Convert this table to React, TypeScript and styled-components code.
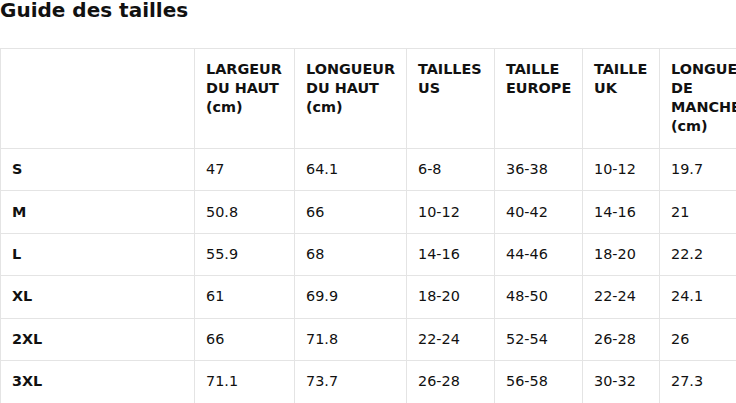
import React from "react";
import styled, { createGlobalStyle } from "styled-components";

const GlobalStyle = createGlobalStyle`
  html, body {
    margin: 0;
    padding: 0;
    background: #ffffff;
    overflow: hidden;
  }
  body {
    font-family: "DejaVu Sans", "Liberation Sans", sans-serif;
    color: #111111;
  }
`;

const Page = styled.div`
  display: flex;
  flex-direction: column;
  gap: 27px;
  width: max-content;
`;

const Title = styled.h1`
  margin: 0;
  font-size: 20px;
  line-height: 21px;
  font-weight: 700;
  color: #111111;
`;

const Table = styled.table`
  border-collapse: collapse;
  table-layout: fixed;
  width: 771px;
  font-size: 14.4px;
  line-height: 19.1px;
`;

const Col = styled.col<{ $w: number }>`
  width: ${(p) => p.$w}px;
`;

const HeadCell = styled.th`
  border: 1px solid #e4e4e4;
  padding: 11px 9px 11.5px 11px;
  text-align: left;
  vertical-align: top;
  font-weight: 700;
  color: #111111;
`;

const RowHead = styled.th`
  border: 1px solid #e4e4e4;
  padding: 11.2px 9px 11.2px 11px;
  text-align: left;
  vertical-align: middle;
  font-weight: 700;
  color: #111111;
`;

const Cell = styled.td`
  border: 1px solid #e4e4e4;
  padding: 11.2px 9px 11.2px 11px;
  text-align: left;
  vertical-align: middle;
  font-weight: 400;
  color: #111111;
`;

const widths = [194, 100, 112, 88, 88, 77, 112];

const headers = [
  "",
  "LARGEUR DU HAUT (cm)",
  "LONGUEUR DU HAUT (cm)",
  "TAILLES US",
  "TAILLE EUROPE",
  "TAILLE UK",
  "LONGUEUR DE MANCHE (cm)",
];

const rows: string[][] = [
  ["S", "47", "64.1", "6-8", "36-38", "10-12", "19.7"],
  ["M", "50.8", "66", "10-12", "40-42", "14-16", "21"],
  ["L", "55.9", "68", "14-16", "44-46", "18-20", "22.2"],
  ["XL", "61", "69.9", "18-20", "48-50", "22-24", "24.1"],
  ["2XL", "66", "71.8", "22-24", "52-54", "26-28", "26"],
  ["3XL", "71.1", "73.7", "26-28", "56-58", "30-32", "27.3"],
];

export default function App() {
  return (
    <>
      <GlobalStyle />
      <Page>
        <Title>Guide des tailles</Title>
        <Table>
          <colgroup>
            {widths.map((w, i) => (
              <Col key={i} $w={w} />
            ))}
          </colgroup>
          <thead>
            <tr>
              {headers.map((h, i) => (
                <HeadCell key={i}>{h}</HeadCell>
              ))}
            </tr>
          </thead>
          <tbody>
            {rows.map((r) => (
              <tr key={r[0]}>
                <RowHead>{r[0]}</RowHead>
                {r.slice(1).map((v, i) => (
                  <Cell key={i}>{v}</Cell>
                ))}
              </tr>
            ))}
          </tbody>
        </Table>
      </Page>
    </>
  );
}
